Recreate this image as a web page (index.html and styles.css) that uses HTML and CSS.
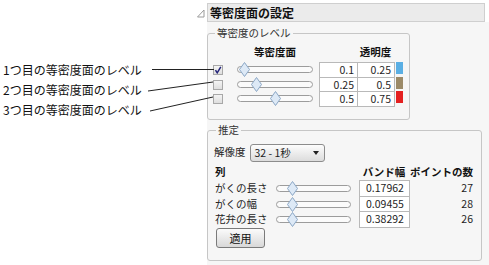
FILE: index.html
```html
<!DOCTYPE html>
<html lang="ja">
  <head>
    <meta charset="UTF-8" />
    <meta name="viewport" content="width=device-width, initial-scale=1.0" />
    <title>等密度面の設定</title>
    <link rel="stylesheet" href="styles.css">
  </head>
  <body>
    <div class="figure">
      <div class="callouts">
        <div class="callout">1つ目の等密度面のレベル</div>
        <div class="callout">2つ目の等密度面のレベル</div>
        <div class="callout">3つ目の等密度面のレベル</div>
      </div>

      <div class="outline">
        <div class="outline-head">
          <span class="toggle">
            <svg width="8" height="9" viewBox="0 0 8 9"><polygon points="7,1 7,8 0.5,8" fill="#fff" stroke="#9a9a9a" stroke-width="1" /></svg>
          </span>
          <div class="title-bar">等密度面の設定</div>
        </div>

        <div class="outline-body">
          <fieldset class="group group-levels">
            <legend>等密度のレベル</legend>
            <div class="level-row level-head">
              <span></span>
              <div class="col-head">等密度面</div>
              <span></span>
              <span></span>
              <div class="col-head">透明度</div>
              <span></span>
            </div>

            <div class="level-row row-tall">
              <span class="check">
                <svg width="8" height="8" viewBox="0 0 8 8"><path d="M1.5 4.2 L3.2 6.8 L6.8 0.8" fill="none" stroke="#23237a" stroke-width="1.5" /></svg>
              </span>
              <div class="slider"><span class="thumb" style="left: 6px"></span></div>
              <span></span>
              <div class="cell">0.1</div>
              <div class="cell">0.25</div>
              <span class="swatch swatch-blue"></span>
            </div>

            <div class="level-row row-short">
              <span class="check"></span>
              <div class="slider"><span class="thumb" style="left: 18px"></span></div>
              <span></span>
              <div class="cell">0.25</div>
              <div class="cell">0.5</div>
              <span class="swatch swatch-brown"></span>
            </div>

            <div class="level-row row-tall">
              <span class="check"></span>
              <div class="slider"><span class="thumb" style="left: 37px"></span></div>
              <span></span>
              <div class="cell">0.5</div>
              <div class="cell">0.75</div>
              <span class="swatch swatch-red"></span>
            </div>
          </fieldset>

          <fieldset class="group group-estimate">
            <legend>推定</legend>
            <div class="resolution">
              <span class="res-label">解像度</span>
              <div class="dropdown">
                <span>32 - 1秒</span>
                <span class="arrow"></span>
              </div>
            </div>

            <div class="band-row band-head">
              <div class="col-head name">列</div>
              <span></span>
              <span></span>
              <div class="col-head band-title">バンド幅</div>
              <div class="col-head count">ポイントの数</div>
            </div>

            <div class="band-row row-tall">
              <div class="name">がくの長さ</div>
              <div class="slider"><span class="thumb" style="left: 15px"></span></div>
              <span></span>
              <div class="cell">0.17962</div>
              <div class="count">27</div>
            </div>

            <div class="band-row row-short">
              <div class="name">がくの幅</div>
              <div class="slider"><span class="thumb" style="left: 15px"></span></div>
              <span></span>
              <div class="cell">0.09455</div>
              <div class="count">28</div>
            </div>

            <div class="band-row row-tall">
              <div class="name">花弁の長さ</div>
              <div class="slider"><span class="thumb" style="left: 15px"></span></div>
              <span></span>
              <div class="cell">0.38292</div>
              <div class="count">26</div>
            </div>

            <button class="apply" type="button">適用</button>
          </fieldset>
        </div>
      </div>

      <svg class="leaders" width="489" height="265" viewBox="0 0 489 265">
        <line x1="152" y1="69.5" x2="214" y2="69.5" />
        <line x1="148" y1="91" x2="213" y2="82" />
        <line x1="150" y1="111" x2="213" y2="97" />
      </svg>
    </div>
  </body>
</html>
```

FILE: styles.css
```css
body {
  margin: 0;
  background: #ffffff;
  font-family: "Noto Sans CJK JP", "Noto Sans", sans-serif;
  color: #1e1e1e;
}

.figure {
  position: relative;
  display: flex;
  width: 489px;
  height: 265px;
  overflow: hidden;
}

/* annotations on the left */
.callouts {
  width: 195px;
  flex-shrink: 0;
  padding: 60px 0 0 3px;
  box-sizing: border-box;
  font-size: 12px;
  line-height: 20px;
  color: #111;
}

.leaders {
  position: absolute;
  left: 0;
  top: 0;
  pointer-events: none;
}

.leaders line {
  stroke: #222;
  stroke-width: 1;
}

/* outline panel */
.outline {
  flex: 1;
  padding-top: 3px;
  display: flex;
  flex-direction: column;
}

.outline-head {
  display: flex;
  align-items: center;
  height: 19px;
}

.toggle {
  width: 12px;
  display: flex;
  justify-content: center;
  padding-top: 2px;
}

.title-bar {
  flex: 1;
  margin-right: 4px;
  height: 19px;
  box-sizing: border-box;
  border: 1px solid #cfcfcf;
  background: #ebebeb;
  font-size: 12px;
  font-weight: bold;
  line-height: 17px;
  padding-left: 2px;
  color: #111;
}

.outline-body {
  flex: 1;
  margin-left: 12px;
  background: #f6f6f6;
  padding-top: 5px;
  font-size: 10.5px;
}

.group {
  margin: 0;
  border: 1px solid #c6c6c6;
  border-radius: 3px;
  box-sizing: border-box;
}

.group legend {
  padding: 0 2px;
  margin-left: 2px;
  line-height: 12px;
  color: #333;
}

.group-levels {
  width: 203px;
  padding: 0 0 13px 5px;
}

.group-estimate {
  width: 275px;
  margin-top: 4px;
  padding: 0 8px 12px 6px;
}

.col-head {
  font-weight: bold;
  line-height: 14px;
  color: #111;
  white-space: nowrap;
}

.row-tall {
  height: 15px;
}

.row-short {
  height: 14px;
}

/* level rows */
.level-row {
  display: grid;
  grid-template-columns: 24px 76px 6px 38px 37px 8px;
}

.level-head {
  height: 14px;
  margin: 6px 0 3px;
  text-align: center;
}

.check {
  align-self: center;
  width: 10px;
  height: 10px;
  box-sizing: border-box;
  border: 1px solid #a8a8a8;
  background: linear-gradient(#f4f4f4, #dedede);
  display: flex;
  align-items: center;
  justify-content: center;
}

.slider {
  position: relative;
  align-self: center;
  height: 7px;
  box-sizing: border-box;
  border: 1px solid #9c9c9c;
  border-radius: 4px;
  background: #fbfbfb;
}

.thumb {
  position: absolute;
  top: -5px;
  width: 11px;
  height: 15px;
  margin-left: -5px;
  background: no-repeat center / 11px 15px url("data:image/svg+xml,%3Csvg xmlns='http://www.w3.org/2000/svg' width='11' height='15' viewBox='0 0 11 15'%3E%3Cpolygon points='5.5,0.5 10.5,7.5 5.5,14.5 0.5,7.5' fill='%23dde9f6' stroke='%238aa6c4'/%3E%3C/svg%3E");
}

.cell {
  width: calc(100% + 1px);
  height: calc(100% + 1px);
  box-sizing: border-box;
  border: 1px solid #b9b9b9;
  background: #ffffff;
  text-align: right;
  padding-right: 3px;
  line-height: 13px;
}

.swatch {
  width: 7px;
  height: 12px;
  margin-left: 2px;
}

.swatch-blue {
  background: #5aafe4;
}

.swatch-brown {
  background: #9b8a68;
}

.swatch-red {
  background: #e42020;
}

/* estimate */
.resolution {
  display: flex;
  align-items: flex-start;
  gap: 4px;
  margin-top: 8px;
}

.res-label {
  line-height: 14px;
  margin-top: 1px;
}

.dropdown {
  width: 75px;
  height: 18px;
  box-sizing: border-box;
  border: 1px solid #8c8c8c;
  border-radius: 3px;
  background: linear-gradient(#fdfdfd, #dcdcdc);
  display: flex;
  align-items: center;
  justify-content: space-between;
  padding: 0 5px 0 4px;
  line-height: 16px;
}

.arrow {
  width: 0;
  height: 0;
  border-left: 3px solid transparent;
  border-right: 3px solid transparent;
  border-top: 4px solid #222;
}

.band-row {
  display: grid;
  grid-template-columns: 62px 75px 8px 50px 64px;
}

.band-row.row-tall {
  height: 16px;
}

.band-row.row-short {
  height: 15px;
}

.band-head {
  height: 14px;
  margin: 3px 0 1px;
}

.band-row .name {
  padding-left: 1px;
  line-height: 15px;
  white-space: nowrap;
}

.band-head .name {
  line-height: 14px;
}

.band-title {
  text-align: center;
}

.band-row .cell {
  text-align: left;
  padding-left: 6px;
  line-height: 14px;
}

.count {
  text-align: right;
  line-height: 15px;
}

.band-head .count {
  line-height: 14px;
}

.apply {
  display: block;
  margin: 1px 0 0 2px;
  width: 49px;
  height: 20px;
  padding: 0;
  border: 1px solid #7a7a7a;
  border-radius: 3px;
  background: linear-gradient(#fbfbfb, #d8d8d8);
  font-family: inherit;
  font-size: 11px;
  color: #111;
  cursor: pointer;
}
```
